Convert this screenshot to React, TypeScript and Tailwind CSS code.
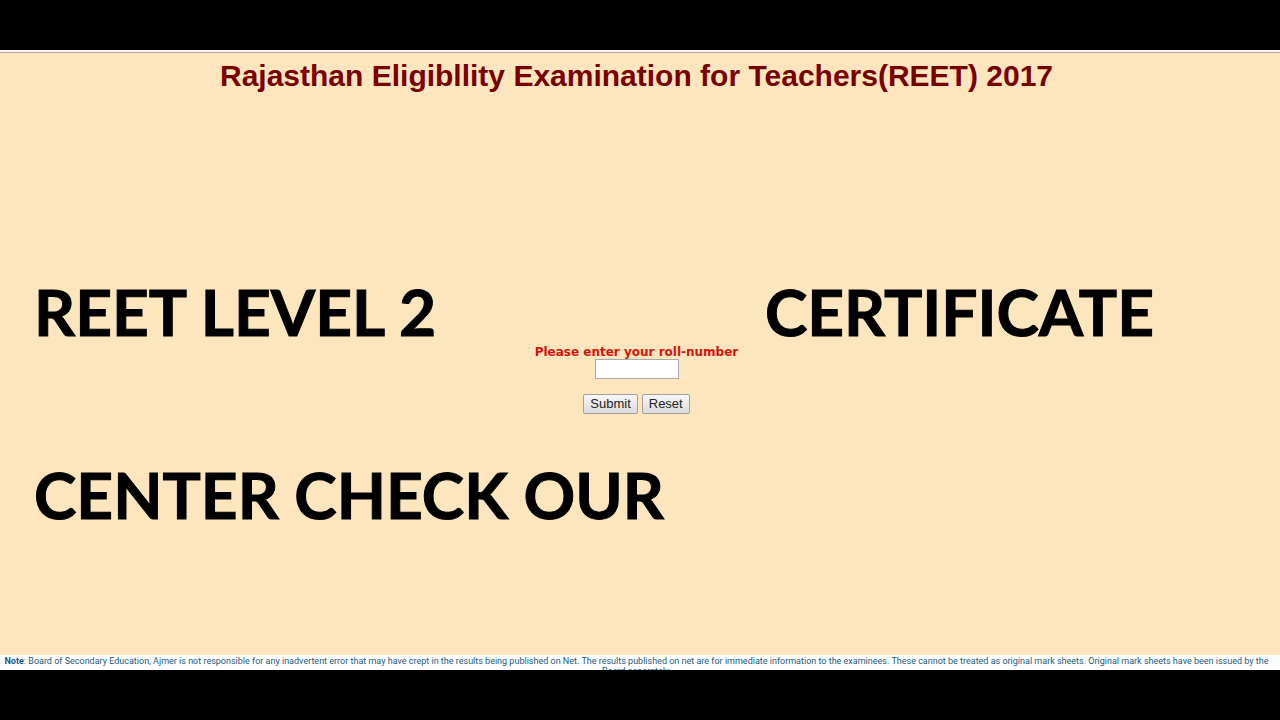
import React, { useState } from 'react';

const captionClass =
  "font-['Lato',sans-serif] text-[64px] leading-[66px] font-bold text-black whitespace-nowrap [-webkit-text-stroke:1px_black]";
const buttonClass =
  "h-5 px-[6px] rounded-[2px] border border-[#a3a09b] bg-linear-to-b from-[#f7f7f7] to-[#dcdcdc] font-['Liberation_Sans',sans-serif] text-[13px] leading-4 text-[#222]";

function RollNumberForm() {
  const [rollNumber, setRollNumber] = useState('');

  return (
    <form
      className="flex flex-col items-center pr-[7px]"
      onSubmit={(e) => e.preventDefault()}
      onReset={() => setRollNumber('')}
    >
      <label
        htmlFor="roll-number"
        className="font-['DejaVu_Sans',sans-serif] text-[12px] leading-[14px] font-bold text-[#d4140c]"
      >
        Please enter your roll-number
      </label>
      <input
        id="roll-number"
        type="text"
        value={rollNumber}
        onChange={(e) => setRollNumber(e.target.value)}
        className="h-5 w-[84px] border border-[#aaa] bg-white px-1 text-[13px]"
      />
      <div className="mt-[15px] flex gap-1">
        <button type="submit" className={buttonClass}>Submit</button>
        <button type="reset" className={buttonClass}>Reset</button>
      </div>
    </form>
  );
}

export default function App() {
  return (
    <div className="flex h-screen flex-col bg-black py-[50px]">
      <div className="h-[3px] shrink-0 border-b border-[#b5aaa5] bg-[#fbf3f0]" />

      <main className="flex-1 bg-[#fde6bd]">
        <h1 className="pt-[5px] pr-[7px] text-center font-['Liberation_Sans',sans-serif] text-[30px] leading-9 font-bold text-[#780000]">
          Rajasthan Eligibllity Examination for Teachers(REET) 2017
        </h1>

        <div className="mt-[185px] flex justify-between pr-[126px] pl-[34px]">
          <p className={captionClass}>REET LEVEL 2</p>
          <p className={captionClass}>CERTIFICATE</p>
        </div>

        <RollNumberForm />

        <p className={`mt-12 pl-[34px] ${captionClass}`}>CENTER CHECK OUR</p>
      </main>

      {/* Disclaimer, the second line is cut off by the bottom bar */}
      <footer className="h-[15px] shrink-0 overflow-hidden bg-white pr-[7px] text-center font-['Roboto',sans-serif] text-[9px] leading-[10px] text-[#1d5a78]">
        <p className="pt-px whitespace-nowrap">
          <b>Note</b>: Board of Secondary Education, Ajmer is not responsible for any inadvertent error that may have crept in the results being published on Net. The results published on net are for immediate information to the examinees. These cannot be treated as original mark sheets. Original mark sheets have been issued by the
          <br />
          Board separately.
        </p>
      </footer>
    </div>
  );
}
